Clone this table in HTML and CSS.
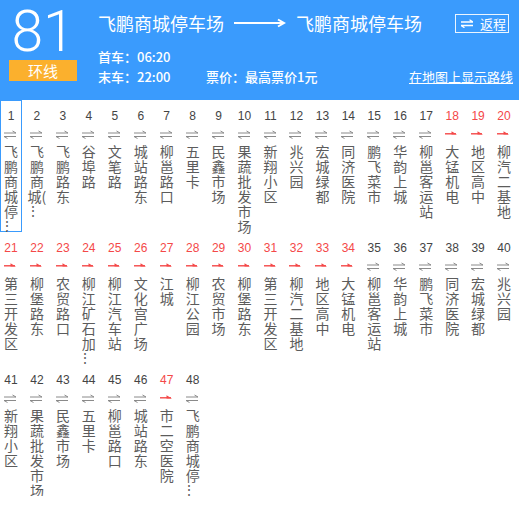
FILE: index.html
```html
<!DOCTYPE html>
<html lang="zh-CN">
<head>
<meta charset="utf-8">
<title>81路</title>
<link rel="stylesheet" href="styles.css">
</head>
<body>
<svg class="defs" width="0" height="0" aria-hidden="true">
  <symbol id="both" viewBox="0 0 12 9">
    <path d="M0 3H12M12 3L8.5 1M0 6.5H12M0 6.5L3.5 8.5" fill="none" stroke="#8a8a8a" stroke-width="1"/>
  </symbol>
  <symbol id="one" viewBox="0 0 12 9">
    <path d="M0 3.8H11" fill="none" stroke="#f44848" stroke-width="1.4"/>
    <path d="M12 4.5L6.5 1.2L6.5 4.5Z" fill="#f44848"/>
  </symbol>
  <symbol id="swap" viewBox="0 0 12 9">
    <path d="M0 3H12M12 3L8.5 0.8M0 6.5H12M0 6.5L3.5 8.7" fill="none" stroke="#fff" stroke-width="1.3"/>
  </symbol>
</svg>

<header class="top">
  <div class="brand">
    <div class="num">81</div>
    <div class="tag">环线</div>
  </div>
  <div class="info">
    <div class="title-row">
      <span class="stn">飞鹏商城停车场</span>
      <svg class="dir" width="52" height="10" viewBox="0 0 52 10"><path d="M0 5H50M44 1.5L50 5L44 8.5" fill="none" stroke="#fff" stroke-width="2"/></svg>
      <span class="stn">飞鹏商城停车场</span>
      <span class="back"><svg class="swap" width="12" height="9"><use href="#swap"/></svg>返程</span>
    </div>
    <div class="line">首车：06:20</div>
    <div class="line split">
      <span class="last">末车：22:00</span>
      <span class="price">票价：最高票价1元</span>
      <a class="map" href="#">在地图上显示路线</a>
    </div>
  </div>
</header>

<main class="stops">
  <div class="stop cur"><div class="no">1</div><svg class="ic"><use href="#both"/></svg><div class="nm">飞鹏商城停<span class="more">⋮</span></div></div>
  <div class="stop"><div class="no">2</div><svg class="ic"><use href="#both"/></svg><div class="nm">飞鹏商城(<span class="more">⋮</span></div></div>
  <div class="stop"><div class="no">3</div><svg class="ic"><use href="#both"/></svg><div class="nm">飞鹏路东</div></div>
  <div class="stop"><div class="no">4</div><svg class="ic"><use href="#both"/></svg><div class="nm">谷埠路</div></div>
  <div class="stop"><div class="no">5</div><svg class="ic"><use href="#both"/></svg><div class="nm">文笔路</div></div>
  <div class="stop"><div class="no">6</div><svg class="ic"><use href="#both"/></svg><div class="nm">城站路东</div></div>
  <div class="stop"><div class="no">7</div><svg class="ic"><use href="#both"/></svg><div class="nm">柳邕路口</div></div>
  <div class="stop"><div class="no">8</div><svg class="ic"><use href="#both"/></svg><div class="nm">五里卡</div></div>
  <div class="stop"><div class="no">9</div><svg class="ic"><use href="#both"/></svg><div class="nm">民鑫市场</div></div>
  <div class="stop"><div class="no">10</div><svg class="ic"><use href="#both"/></svg><div class="nm">果蔬批发市场</div></div>
  <div class="stop"><div class="no">11</div><svg class="ic"><use href="#both"/></svg><div class="nm">新翔小区</div></div>
  <div class="stop"><div class="no">12</div><svg class="ic"><use href="#both"/></svg><div class="nm">兆兴园</div></div>
  <div class="stop"><div class="no">13</div><svg class="ic"><use href="#both"/></svg><div class="nm">宏城绿都</div></div>
  <div class="stop"><div class="no">14</div><svg class="ic"><use href="#both"/></svg><div class="nm">同济医院</div></div>
  <div class="stop"><div class="no">15</div><svg class="ic"><use href="#both"/></svg><div class="nm">鹏飞菜市</div></div>
  <div class="stop"><div class="no">16</div><svg class="ic"><use href="#both"/></svg><div class="nm">华韵上城</div></div>
  <div class="stop"><div class="no">17</div><svg class="ic"><use href="#both"/></svg><div class="nm">柳邕客运站</div></div>
  <div class="stop red"><div class="no">18</div><svg class="ic"><use href="#one"/></svg><div class="nm">大锰机电</div></div>
  <div class="stop red"><div class="no">19</div><svg class="ic"><use href="#one"/></svg><div class="nm">地区高中</div></div>
  <div class="stop red"><div class="no">20</div><svg class="ic"><use href="#one"/></svg><div class="nm">柳汽二基地</div></div>
  <div class="stop red"><div class="no">21</div><svg class="ic"><use href="#one"/></svg><div class="nm">第三开发区</div></div>
  <div class="stop red"><div class="no">22</div><svg class="ic"><use href="#one"/></svg><div class="nm">柳堡路东</div></div>
  <div class="stop red"><div class="no">23</div><svg class="ic"><use href="#one"/></svg><div class="nm">农贸路口</div></div>
  <div class="stop red"><div class="no">24</div><svg class="ic"><use href="#one"/></svg><div class="nm">柳江矿石加<span class="more">⋮</span></div></div>
  <div class="stop red"><div class="no">25</div><svg class="ic"><use href="#one"/></svg><div class="nm">柳江汽车站</div></div>
  <div class="stop red"><div class="no">26</div><svg class="ic"><use href="#one"/></svg><div class="nm">文化宫广场</div></div>
  <div class="stop red"><div class="no">27</div><svg class="ic"><use href="#one"/></svg><div class="nm">江城</div></div>
  <div class="stop red"><div class="no">28</div><svg class="ic"><use href="#one"/></svg><div class="nm">柳江公园</div></div>
  <div class="stop red"><div class="no">29</div><svg class="ic"><use href="#one"/></svg><div class="nm">农贸市场</div></div>
  <div class="stop red"><div class="no">30</div><svg class="ic"><use href="#one"/></svg><div class="nm">柳堡路东</div></div>
  <div class="stop red"><div class="no">31</div><svg class="ic"><use href="#one"/></svg><div class="nm">第三开发区</div></div>
  <div class="stop red"><div class="no">32</div><svg class="ic"><use href="#one"/></svg><div class="nm">柳汽二基地</div></div>
  <div class="stop red"><div class="no">33</div><svg class="ic"><use href="#one"/></svg><div class="nm">地区高中</div></div>
  <div class="stop red"><div class="no">34</div><svg class="ic"><use href="#one"/></svg><div class="nm">大锰机电</div></div>
  <div class="stop"><div class="no">35</div><svg class="ic"><use href="#both"/></svg><div class="nm">柳邕客运站</div></div>
  <div class="stop"><div class="no">36</div><svg class="ic"><use href="#both"/></svg><div class="nm">华韵上城</div></div>
  <div class="stop"><div class="no">37</div><svg class="ic"><use href="#both"/></svg><div class="nm">鹏飞菜市</div></div>
  <div class="stop"><div class="no">38</div><svg class="ic"><use href="#both"/></svg><div class="nm">同济医院</div></div>
  <div class="stop"><div class="no">39</div><svg class="ic"><use href="#both"/></svg><div class="nm">宏城绿都</div></div>
  <div class="stop"><div class="no">40</div><svg class="ic"><use href="#both"/></svg><div class="nm">兆兴园</div></div>
  <div class="stop"><div class="no">41</div><svg class="ic"><use href="#both"/></svg><div class="nm">新翔小区</div></div>
  <div class="stop"><div class="no">42</div><svg class="ic"><use href="#both"/></svg><div class="nm">果蔬批发市场</div></div>
  <div class="stop"><div class="no">43</div><svg class="ic"><use href="#both"/></svg><div class="nm">民鑫市场</div></div>
  <div class="stop"><div class="no">44</div><svg class="ic"><use href="#both"/></svg><div class="nm">五里卡</div></div>
  <div class="stop"><div class="no">45</div><svg class="ic"><use href="#both"/></svg><div class="nm">柳邕路口</div></div>
  <div class="stop"><div class="no">46</div><svg class="ic"><use href="#both"/></svg><div class="nm">城站路东</div></div>
  <div class="stop red"><div class="no">47</div><svg class="ic"><use href="#one"/></svg><div class="nm">市二空医院</div></div>
  <div class="stop"><div class="no">48</div><svg class="ic"><use href="#both"/></svg><div class="nm">飞鹏商城停<span class="more">⋮</span></div></div>
</main>
</body>
</html>
```

FILE: styles.css
```css
body {
  margin: 0;
  background: #fff;
  font-family: "Noto Sans CJK SC", "Liberation Sans", sans-serif;
}

.defs {
  position: absolute;
  width: 0;
  height: 0;
  overflow: hidden;
}

.top {
  height: 100px;
  background: #3a9bfd;
  color: #fff;
  display: flex;
}

.brand {
  width: 98px;
  padding-left: 9px;
  box-sizing: border-box;
  flex: none;
}

.num {
  width: 68px;
  height: 60px;
  box-sizing: border-box;
  padding-top: 4px;
  text-align: center;
  font-family: Roboto, "Liberation Sans", sans-serif;
  font-weight: 300;
  font-size: 57px;
  line-height: 56px;
}

.tag {
  width: 68px;
  height: 21px;
  background: #fbb02d;
  text-align: center;
  font-size: 15px;
  line-height: 21px;
}

.info {
  flex: 1;
  padding: 12px 6px 0 0;
  min-width: 0;
}

.title-row {
  display: flex;
  align-items: center;
  height: 22px;
  font-size: 18px;
  line-height: 22px;
  white-space: nowrap;
}

.dir {
  display: block;
  margin: 0 10px;
}

.back {
  margin-left: auto;
  margin-right: 4px;
  height: 19px;
  box-sizing: border-box;
  border: 1px solid rgba(255, 255, 255, 0.9);
  display: flex;
  align-items: center;
  gap: 7px;
  padding: 0 2px 0 5px;
  font-size: 13px;
  line-height: 17px;
}

.swap {
  display: block;
}

.line {
  font-size: 13px;
  line-height: 20px;
  font-weight: 500;
  white-space: nowrap;
}

.title-row + .line {
  margin-top: 13px;
}

.split {
  display: flex;
}

.last {
  width: 108px;
}

.map {
  margin-left: auto;
  color: #fff;
  text-decoration: underline;
  font-weight: 400;
}

.stops {
  display: grid;
  grid-template-columns: repeat(20, 1fr);
}

.stop {
  width: 22px;
  height: 132px;
  box-sizing: border-box;
  padding-top: 8px;
}

.stop.cur {
  box-shadow: inset 0 0 0 1px #3a9bfd;
}

.no {
  height: 16px;
  text-align: center;
  font-family: "Liberation Sans", sans-serif;
  font-size: 12px;
  line-height: 16px;
  color: #444;
}

.red .no {
  color: #f44848;
}

.ic {
  display: block;
  width: 12px;
  height: 9px;
  margin: 6px 0 5px 4px;
}

.nm {
  width: 22px;
  text-align: center;
  font-size: 14px;
  line-height: 15px;
  color: #5c5c5c;
  word-break: break-all;
}

.more {
  display: block;
  text-align: left;
  line-height: 13px;
}
```
